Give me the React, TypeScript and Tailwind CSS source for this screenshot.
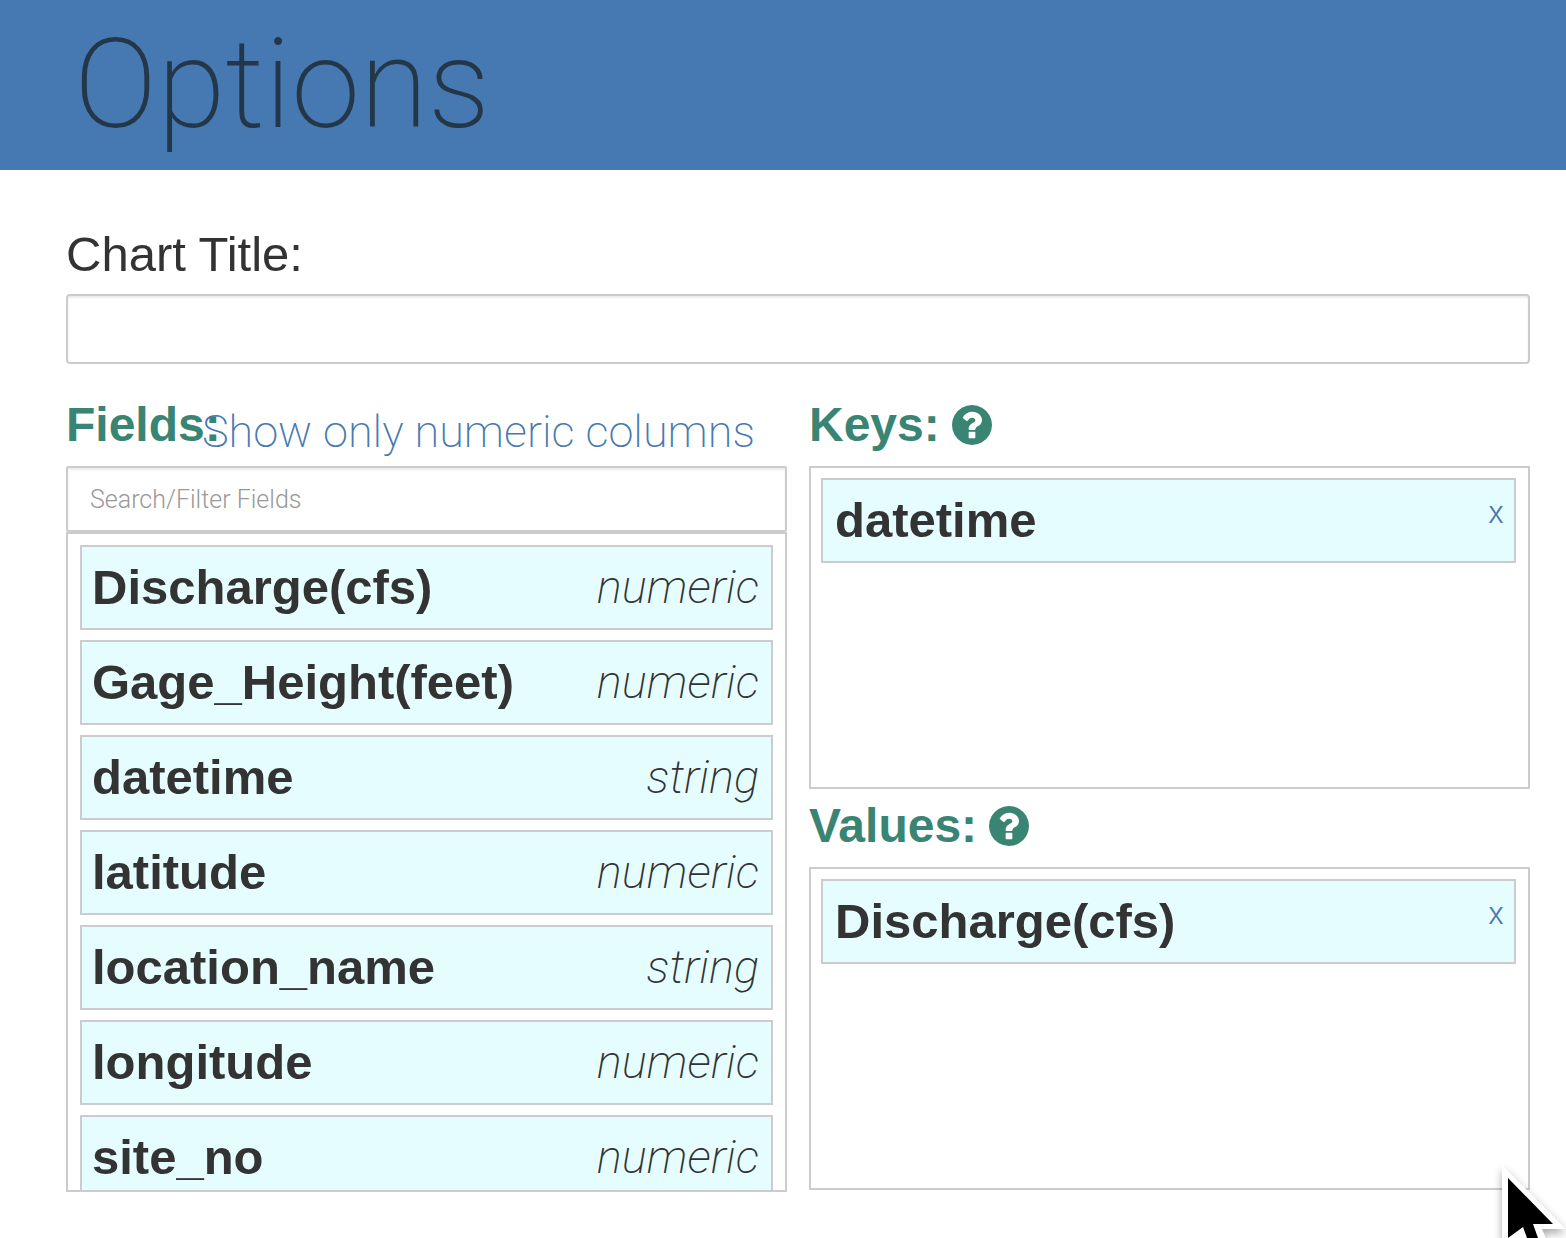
type Field = { name: string; type: string };

const fields: Field[] = [
  { name: "Discharge(cfs)", type: "numeric" },
  { name: "Gage_Height(feet)", type: "numeric" },
  { name: "datetime", type: "string" },
  { name: "latitude", type: "numeric" },
  { name: "location_name", type: "string" },
  { name: "longitude", type: "numeric" },
  { name: "site_no", type: "numeric" },
];

function HelpIcon() {
  return (
    <svg viewBox="0 0 1536 1536" className="size-10" fill="currentColor" aria-hidden="true">
      <path d="M896 1248v-192q0-14-9-23t-23-9H672q-14 0-23 9t-9 23v192q0 14 9 23t23 9h192q14 0 23-9t9-23zm256-672q0-88-55.500-163T958 297t-170-41q-243 0-371 213-15 24 8 42l132 100q7 6 19 6 16 0 25-12 53-68 86-92 34-24 86-24 48 0 85.500 26t37.500 59q0 38-20 61t-68 45q-63 28-115.500 86.500T640 892v36q0 14 9 23t23 9h192q14 0 23-9t9-23q0-19 21.500-49.500T972 829q32-18 49-28.500t46-35 44.500-48 28-60.500 12.500-81zm384 192q0 209-103 385.500T1153.500 1433 768 1536t-385.500-103T103 1153.500 0 768t103-385.500T382.500 103 768 0t385.500 103T1433 382.500 1536 768z" />
    </svg>
  );
}

function DropBox({ title, item }: { title: string; item: string }) {
  return (
    <section>
      <h2 className="flex h-[78px] items-center gap-3 pb-1 text-[48px] font-bold text-[#398472]">
        {title}
        <button type="button" aria-label={"Help for " + title}>
          <HelpIcon />
        </button>
      </h2>
      <div className="h-[323px] border-2 border-[#ccc] py-2.5 pr-3 pl-2.5">
        <div className="flex h-[85px] items-start justify-between border-2 border-[#ccc] bg-[#e5fdff] pr-2.5 pl-3">
          <span className="text-[49px] leading-[81px] font-bold">{item}</span>
          <button
            type="button"
            aria-label={"Remove " + item}
            className="mt-4 font-['Inter'] text-[30px] leading-8 font-light text-[#4679b2]"
          >
            x
          </button>
        </div>
      </div>
    </section>
  );
}

export default function App() {
  return (
    <div className="relative overflow-hidden bg-white pb-[46px] font-['Liberation_Sans',Arial,sans-serif] text-[#333]">
      <header className="flex h-[170px] items-center bg-[#4679b2] pl-[74px]">
        <h1 className="font-['Roboto',sans-serif] text-[124px] leading-none font-extralight text-[#243748]">
          Options
        </h1>
      </header>

      <main className="pt-14 pr-9 pl-[66px]">
        <label htmlFor="chart-title" className="block text-[49px] leading-[56px]">
          Chart Title:
        </label>
        <input
          id="chart-title"
          type="text"
          className="mt-3 block h-[70px] w-full rounded border-2 border-[#ccc] px-6 text-[28px] shadow-[inset_0_2px_2px_rgba(0,0,0,0.08)] outline-none"
        />

        <div className="mt-6 grid grid-cols-2 gap-[22px]">
          <section>
            <div className="relative flex h-[78px] items-center pb-1">
              <h2 className="text-[48px] font-bold text-[#398472]">Fields:</h2>
              <a
                href="#numeric"
                className="absolute top-4 right-8 font-['Roboto',sans-serif] text-[45px] leading-[56px] font-extralight whitespace-nowrap text-[#4679b2]"
              >
                Show only numeric columns
              </a>
            </div>
            <input
              type="text"
              aria-label="Search/Filter Fields"
              placeholder="Search/Filter Fields"
              className="block h-[66px] w-full rounded-xs border-2 border-[#ccc] px-[22px] font-['Roboto',sans-serif] text-[25px] font-light shadow-[inset_0_2px_2px_rgba(0,0,0,0.08)] outline-none placeholder:text-[#999]"
            />
            <ul className="flex h-[660px] flex-col gap-2.5 overflow-hidden border-2 border-[#ccc] px-3 pt-[11px]">
              {fields.map((f) => (
                <li
                  key={f.name}
                  className="flex h-[85px] shrink-0 items-center justify-between border-2 border-[#ccc] bg-[#e5fdff] pr-3 pl-2.5"
                >
                  <span className="text-[49px] font-bold">{f.name}</span>
                  <em className="font-['Roboto',sans-serif] text-[47px] font-extralight">{f.type}</em>
                </li>
              ))}
            </ul>
          </section>

          <div className="flex flex-col">
            <DropBox title="Keys:" item="datetime" />
            <DropBox title="Values:" item="Discharge(cfs)" />
          </div>
        </div>
      </main>

      <svg
        viewBox="0 0 66 76"
        className="absolute right-0 bottom-0 h-[76px] w-[66px] drop-shadow-[0_4px_4px_rgba(0,0,0,0.35)]"
        aria-hidden="true"
      >
        <path d="M2 3V76H46L42 67H66Z" fill="#fff" />
        <path d="M8 16V76L23 65L27 76H38L33 62H53Z" fill="#000" />
      </svg>
    </div>
  );
}
